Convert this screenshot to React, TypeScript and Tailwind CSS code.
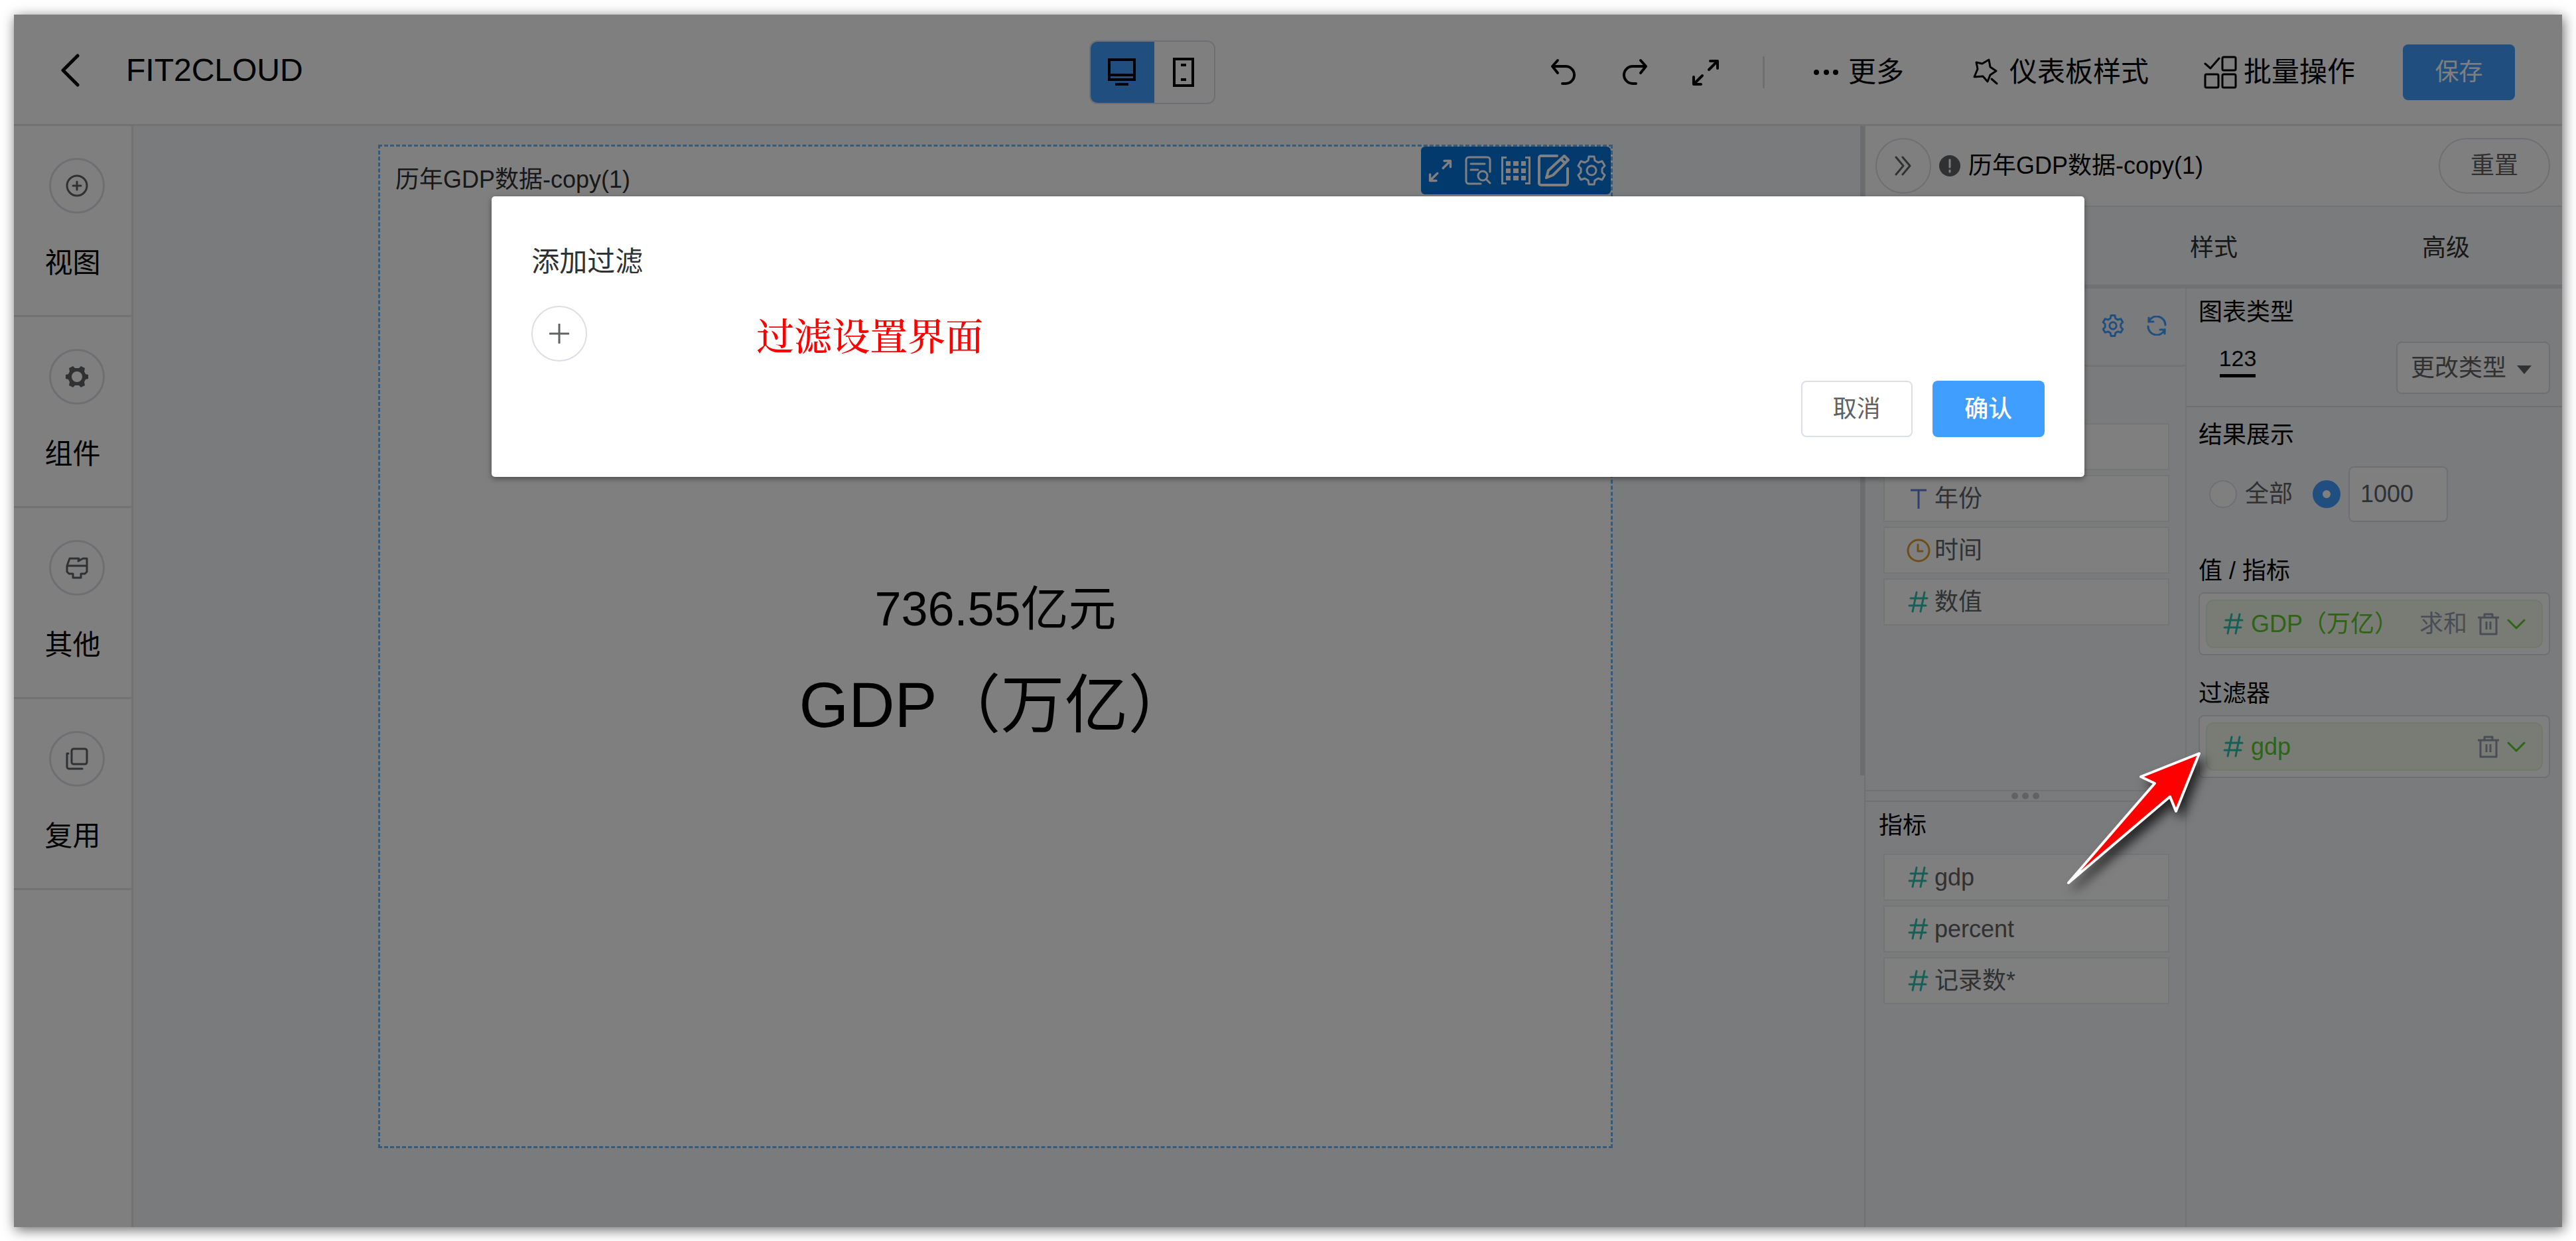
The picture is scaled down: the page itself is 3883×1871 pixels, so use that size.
import React from "react";

type IconProps = { className?: string };

const Stroke = ({
  className = "size-[42px]",
  box = "0 0 24 24",
  width = 2,
  children,
}: IconProps & { box?: string; width?: number; children: React.ReactNode }) => (
  <svg
    className={className}
    viewBox={box}
    fill="none"
    stroke="currentColor"
    strokeWidth={width}
    strokeLinecap="round"
    strokeLinejoin="round"
    aria-hidden="true"
  >
    {children}
  </svg>
);

const BackIcon = () => (
  <Stroke className="h-[50px] w-[28px]" box="0 0 28 50" width={5}>
    <path d="M25 3 3 25l22 22" />
  </Stroke>
);

const DesktopIcon = () => (
  <Stroke className="h-[42px] w-[44px]" box="0 0 44 42" width={4}>
    <path strokeLinejoin="miter" strokeLinecap="butt" d="M3 2h38v30H3zM3 25h38M12 39h20" />
  </Stroke>
);

const TabletIcon = () => (
  <Stroke className="h-[44px] w-[34px]" box="0 0 34 44" width={4}>
    <path strokeLinejoin="miter" d="M3 2h28v40H3z" />
    <path strokeLinecap="butt" d="M13 11h8M13 33h8" />
  </Stroke>
);

const UndoIcon = () => (
  <Stroke box="0 0 42 42" width={4}>
    <path d="M12 3 4 12l8 10M5 12h19a13 13 0 0 1 0 26h-5" />
  </Stroke>
);

const RedoIcon = () => (
  <Stroke box="0 0 42 42" width={4}>
    <path d="m30 3 8 9-8 10M37 12H18a13 13 0 0 0 0 26h5" />
  </Stroke>
);

const ExpandIcon = ({ className = "size-[42px]" }: IconProps) => (
  <Stroke className={className} box="0 0 42 42" width={4}>
    <path d="M28 4h11v11M38 5 26 17M14 39H3V28M4 38l12-12" />
  </Stroke>
);

const DotsIcon = () => (
  <svg className="size-[42px]" viewBox="0 0 42 42" fill="currentColor" aria-hidden="true">
    <circle cx="6" cy="21" r="4" />
    <circle cx="21" cy="21" r="4" />
    <circle cx="35" cy="21" r="4" />
  </svg>
);

const StarIcon = () => (
  <Stroke box="0 0 42 42" width={3}>
    <path d="m8 6 9 2 10-6 2 11 9 6-9 6-4 10-7-8-13 1 5-12z" />
    <path d="m31 31 8 7" />
  </Stroke>
);

const BatchIcon = () => (
  <Stroke className="size-[50px]" box="0 0 50 50" width={3}>
    <path d="m2 12 8 7L23 4" />
    <rect x="28" y="2" width="20" height="20" rx="2" />
    <rect x="2" y="28" width="20" height="20" rx="2" />
    <rect x="28" y="28" width="20" height="20" rx="2" />
  </Stroke>
);

const PlusCircleIcon = () => (
  <Stroke className="size-[34px]" box="0 0 34 34" width={3}>
    <circle cx="17" cy="17" r="15" />
    <path d="M17 11v12M11 17h12" />
  </Stroke>
);

const CogIcon = () => (
  <svg className="size-[34px]" viewBox="0 0 34 34" fill="currentColor" fillRule="evenodd" aria-hidden="true">
    <path d="m17 4 3 0 3-3 6 3-1 5 2 4 4 1v6l-4 1-2 4 1 5-6 3-3-3h-6l-3 3-6-3 1-5-2-4-4-1v-6l4-1 2-4-1-5 6-3 3 3zm0 5a8 8 0 1 0 0 16 8 8 0 0 0 0-16z" />
  </svg>
);

const ToolboxIcon = () => (
  <Stroke className="size-[34px]" box="0 0 34 34" width={3}>
    <path d="M2 14 6 3h14l-1 4 7-4h6v11M2 14h30v9l-3 3h-6v6H11v-6H5l-3-3z" />
  </Stroke>
);

const CopyIcon = () => (
  <Stroke className="size-[34px]" box="0 0 34 34" width={3}>
    <rect x="9" y="2" width="23" height="23" rx="3" />
    <path d="M4 9H2v20a3 3 0 0 0 3 3h20" />
  </Stroke>
);

const DocSearchIcon = () => (
  <Stroke className="h-[44px] w-[40px]" box="0 0 40 44" width={3}>
    <path d="M24 42H6a4 4 0 0 1-4-4V6a4 4 0 0 1 4-4h28a4 4 0 0 1 4 4v18M9 12h21M9 21h11" />
    <circle cx="27" cy="30" r="7" />
    <path d="m32 35 6 6" />
  </Stroke>
);

const GridIcon = () => (
  <svg className="h-[42px] w-[44px]" viewBox="0 0 44 42" fill="currentColor" aria-hidden="true">
    <path d="M0 0h8v3H3v36h5v3H0zM44 0h-8v3h5v36h-5v3h8zM7 7h7v7H7zM18 7h8v7h-8zM30 7h7v7h-7zM7 18h7v7H7zM18 18h8v7h-8zM30 18h7v7h-7zM7 29h7v7H7zM18 29h8v7h-8zM30 29h7v7h-7z" />
  </svg>
);

const EditIcon = () => (
  <Stroke className="size-[50px]" box="0 0 50 50" width={4}>
    <path d="M30 3H6a3 3 0 0 0-3 3v38a3 3 0 0 0 3 3h37a3 3 0 0 0 3-3V22" />
    <path d="m14 36 3-11L41 3l6 6-23 23zM36 8l6 6" />
  </Stroke>
);

const GearIcon = ({ className = "size-[46px]", width = 3 }: IconProps & { width?: number }) => (
  <Stroke className={className} box="0 0 46 46" width={width}>
    <path d="M19 2h8l1 6 5 3 6-2 4 7-4 4v6l4 4-4 7-6-2-5 3-1 6h-8l-1-6-5-3-6 2-4-7 4-4v-6l-4-4 4-7 6 2 5-3z" />
    <circle cx="23" cy="23" r="7" />
  </Stroke>
);

const RefreshIcon = () => (
  <Stroke className="size-[30px]" box="0 0 30 30" width={3}>
    <path d="M3 9a13 13 0 0 1 25 5M27 21A13 13 0 0 1 2 16" />
    <path d="M3 3v6h7M27 27v-6h-7" strokeLinejoin="miter" />
  </Stroke>
);

const ChevronsIcon = () => (
  <Stroke className="h-[30px] w-[26px]" box="0 0 26 30" width={3}>
    <path d="m2 2 11 13L2 28M12 2l11 13-11 13" />
  </Stroke>
);

const WarnIcon = () => (
  <svg className="size-[32px] text-[#606266]" viewBox="0 0 32 32" aria-hidden="true">
    <circle cx="16" cy="16" r="16" fill="currentColor" />
    <path d="M16 7v11M16 23v2" stroke="#fff" strokeWidth="3" strokeLinecap="round" />
  </svg>
);

const TextTypeIcon = () => (
  <Stroke className="size-[36px] text-[#5b7fd6]" box="0 0 36 36" width={3}>
    <path strokeLinecap="butt" d="M6 5h24M18 5v28" />
  </Stroke>
);

const ClockIcon = () => (
  <Stroke className="size-[36px] text-[#e09a2c]" box="0 0 36 36" width={3}>
    <circle cx="18" cy="18" r="16" />
    <path d="M17 9v10h7" />
  </Stroke>
);

const HashIcon = () => (
  <Stroke className="size-[36px] text-[#2bbfae]" box="0 0 36 36" width={3}>
    <path d="M15 3 9 32M27 3l-6 29M6 12h25M4 23h25" />
  </Stroke>
);

const TrashIcon = () => (
  <Stroke className="h-[34px] w-[32px]" box="0 0 32 34" width={3}>
    <path strokeLinecap="butt" d="M0 7h32M4 7v25h24V7M10 7V2h12v5M13 13v12M19 13v12" />
  </Stroke>
);

const ChevronDownIcon = () => (
  <Stroke className="h-[18px] w-[28px] text-[#5bc82a]" box="0 0 28 18" width={3}>
    <path d="m2 3 12 12L26 3" />
  </Stroke>
);

const sideItems = [
  { label: "视图", icon: <PlusCircleIcon /> },
  { label: "组件", icon: <CogIcon /> },
  { label: "其他", icon: <ToolboxIcon /> },
  { label: "复用", icon: <CopyIcon /> },
];

function TopBar() {
  return (
    <header className="flex h-[168px] shrink-0 items-center border-b-3 border-[#e4e4e4] bg-white pt-2 pr-[71px] text-black">
      <div className="flex w-[43%] items-center gap-[70px] pb-1.5 pl-[71px]">
        <button aria-label="返回">
          <BackIcon />
        </button>
        <h1 className="text-[48px] leading-none">FIT2CLOUD</h1>
      </div>
      <div className="flex h-24 w-[190px] overflow-hidden rounded-xl border-2 border-[#dcdfe6]">
        <button aria-label="桌面" className="-m-0.5 flex w-[98px] items-center justify-center bg-[#409eff]">
          <DesktopIcon />
        </button>
        <button aria-label="移动" className="flex flex-1 items-center justify-center">
          <TabletIcon />
        </button>
      </div>
      <div className="ml-auto flex items-center text-[42px] leading-none">
        <div className="mr-[72px] flex items-center gap-[65px]">
          <button aria-label="撤销">
            <UndoIcon />
          </button>
          <button aria-label="重做">
            <RedoIcon />
          </button>
          <button aria-label="全屏">
            <ExpandIcon />
          </button>
          <span className="h-12 w-[3px] bg-[#dcdfe6]" />
        </div>
        <button className="mr-[101px] flex items-center gap-3">
          <DotsIcon />
          更多
        </button>
        <button className="mr-[83px] flex items-center gap-4">
          <StarIcon />
          仪表板样式
        </button>
        <button className="mr-[72px] flex items-center gap-2.5">
          <BatchIcon />
          批量操作
        </button>
        <button className="h-[84px] w-[169px] rounded-lg bg-[#409eff] text-[36px] text-white">保存</button>
      </div>
    </header>
  );
}

function SideNav() {
  return (
    <nav className="w-[180px] shrink-0 border-r-3 border-[#e4e4e4] bg-white text-[42px] leading-none text-black">
      {sideItems.map((item) => (
        <button
          key={item.label}
          className="flex h-72 w-full flex-col items-center gap-[54px] border-b-3 border-[#e4e4e4] pt-12"
        >
          <span className="ml-3 flex size-[84px] items-center justify-center rounded-full border-3 border-[#dcdfe6] text-[#606266]">
            {item.icon}
          </span>
          {item.label}
        </button>
      ))}
    </nav>
  );
}

function Canvas() {
  return (
    <main className="relative flex min-w-0 flex-1 bg-[#f5f7fa] pt-[28px] pr-[379px] pb-[119px] pl-[369px]">
      <section className="relative flex flex-1 flex-col border-3 border-dashed border-[#70b4ee] bg-white">
        <h2 className="pt-8 pl-[23px] text-[36px] leading-none text-[#303133]">历年GDP数据-copy(1)</h2>
        <div className="flex flex-1 flex-col items-center justify-center gap-[61px] pb-[24px] text-black">
          <p className="text-[72px] leading-none">736.55亿元</p>
          <p className="text-[96px] leading-none">GDP（万亿）</p>
        </div>
        <div className="absolute top-0 right-0 grid h-[72px] w-[286px] grid-cols-5 place-items-center rounded-md bg-[#0674dc] text-white">
          <button aria-label="放大">
            <ExpandIcon className="size-[36px]" />
          </button>
          <button aria-label="查看">
            <DocSearchIcon />
          </button>
          <button aria-label="表格">
            <GridIcon />
          </button>
          <button aria-label="编辑">
            <EditIcon />
          </button>
          <button aria-label="设置">
            <GearIcon />
          </button>
        </div>
      </section>
      <div className="absolute top-0 right-0 h-[59%] w-1.5 bg-[#d6d8e0]" />
    </main>
  );
}

function FieldRow({ icon, label }: { icon: React.ReactNode; label: string }) {
  return (
    <li className="flex h-[71px] items-center gap-1.5 border-2 border-[#e9ece8] bg-white pl-[33px]">
      {icon}
      {label}
    </li>
  );
}

function FieldColumn() {
  return (
    <div className="flex w-[484px] shrink-0 flex-col border-r-2 border-[#e6e6e6] text-[36px] leading-none text-[#606266]">
      <div className="flex h-[756px] flex-col">
        <div className="flex h-[118px] shrink-0 items-center justify-end gap-[34px] border-b-3 border-[#e6e6e6] pr-7 pb-1 text-[#409eff]">
          <input
            aria-label="搜索"
            placeholder="搜索"
            className="mr-[-6px] h-[75px] w-[310px] rounded-lg border-2 border-[#dcdfe6] bg-white px-4"
          />
          <button aria-label="字段设置">
            <GearIcon className="size-[34px]" width={4} />
          </button>
          <button aria-label="刷新">
            <RefreshIcon />
          </button>
        </div>
        <h3 className="px-5 pt-6 pb-[25px] text-black">维度</h3>
        <ul className="flex flex-col gap-[7px] pr-6 pl-[27px]">
          <FieldRow icon={<TextTypeIcon />} label="地区" />
          <FieldRow icon={<TextTypeIcon />} label="年份" />
          <FieldRow icon={<ClockIcon />} label="时间" />
          <FieldRow icon={<HashIcon />} label="数值" />
        </ul>
      </div>
      <div className="flex h-[18px] shrink-0 items-center justify-center gap-1.5 border-y-2 border-[#e0e2e6]">
        <span className="size-2.5 rounded-full bg-[#c0c4cc]" />
        <span className="size-2.5 rounded-full bg-[#c0c4cc]" />
        <span className="size-2.5 rounded-full bg-[#c0c4cc]" />
      </div>
      <h3 className="px-5 pt-[18px] pb-6 text-black">指标</h3>
      <ul className="flex flex-col gap-[7px] pr-6 pl-[27px]">
        <FieldRow icon={<HashIcon />} label="gdp" />
        <FieldRow icon={<HashIcon />} label="percent" />
        <FieldRow icon={<HashIcon />} label="记录数*" />
      </ul>
    </div>
  );
}

function Chip({ label, extra }: { label: string; extra?: string }) {
  return (
    <div className="mt-[14px] rounded-lg border-2 border-[#dcdfe6] bg-white p-[9px]">
      <div className="flex h-[73px] items-center rounded-xl border-2 border-[#e1f3d8] bg-[#f3f9ea] pr-6 pl-[22px] text-[#5bc82a]">
        <HashIcon />
        <span className="ml-2 flex-1">{label}</span>
        <span className="text-[#9498ad]">{extra}</span>
        <button aria-label="删除" className="ml-4 text-[#9498ad]">
          <TrashIcon />
        </button>
        <button aria-label="展开" className="ml-3">
          <ChevronDownIcon />
        </button>
      </div>
    </div>
  );
}

function ChartColumn() {
  return (
    <div className="min-w-0 flex-1 text-[36px] leading-none text-black">
      <section className="h-[179px] border-b-2 border-[#dcdfe6] pt-[18px] pr-[18px] pl-[18px]">
        <h3>图表类型</h3>
        <div className="mt-[26px] flex items-start justify-between">
          <span className="mt-1 ml-8 flex h-[50px] w-[54px] items-center justify-center border-b-5 border-black pb-1 text-[34px]">
            123
          </span>
          <div className="relative">
            <select
              aria-label="更改类型"
              className="h-[79px] w-[232px] appearance-none rounded-lg border-2 border-[#dcdfe6] bg-white pl-5 text-[#606266]"
            >
              <option>更改类型</option>
            </select>
            <svg
              className="pointer-events-none absolute top-9 right-7 h-[13px] w-[22px] text-[#606266]"
              viewBox="0 0 22 13"
              fill="currentColor"
              aria-hidden="true"
            >
              <path d="M0 0h22L11 13z" />
            </svg>
          </div>
        </div>
      </section>
      <section className="px-[18px] pt-6">
        <h3>结果展示</h3>
        <div className="mt-[29px] flex h-[84px] items-center pl-4 text-[#606266]">
          <label className="flex items-center gap-3">
            <input
              type="radio"
              name="limit"
              className="size-[42px] appearance-none rounded-full border-2 border-[#dcdfe6] bg-white"
            />
            全部
          </label>
          <input
            type="radio"
            name="limit"
            aria-label="限制条数"
            defaultChecked
            className="ml-[30px] size-[42px] appearance-none rounded-full border-15 border-[#409eff] bg-white"
          />
          <input
            aria-label="条数"
            defaultValue="1000"
            className="ml-3 h-[84px] w-[150px] rounded-lg border-2 border-[#dcdfe6] bg-white px-4"
          />
        </div>
        <h3 className="mt-[56px]">值 / 指标</h3>
        <Chip label="GDP（万亿）" extra="求和" />
        <h3 className="mt-10">过滤器</h3>
        <Chip label="gdp" />
      </section>
    </div>
  );
}

function ConfigPanel() {
  return (
    <aside className="flex w-[1052px] shrink-0 flex-col border-l-2 border-[#e0e2da] bg-[#f5f7fa]">
      <div className="flex h-[122px] shrink-0 items-center border-b-2 border-[#e6e6e6] bg-white pr-[18px] pl-[15px] text-[36px] leading-none text-black">
        <button
          aria-label="收起"
          className="flex size-[84px] items-center justify-center rounded-full border-2 border-[#dcdfe6] text-[#606266]"
        >
          <ChevronsIcon />
        </button>
        <span className="mr-3 ml-3">
          <WarnIcon />
        </span>
        <h2 className="flex-1">历年GDP数据-copy(1)</h2>
        <button className="h-[84px] w-[168px] rounded-full border-2 border-[#dcdfe6] text-[#606266]">重置</button>
      </div>
      <div
        role="tablist"
        className="grid h-[123px] shrink-0 grid-cols-3 border-b-6 border-[#dfe2ea] pt-1.5 text-[36px] leading-none text-[#303133]"
      >
        <button role="tab" aria-selected="true" className="text-[#409eff]">
          数据
        </button>
        <button role="tab">样式</button>
        <button role="tab">高级</button>
      </div>
      <div className="flex flex-1">
        <FieldColumn />
        <ChartColumn />
      </div>
    </aside>
  );
}

function FilterDialog() {
  return (
    <div className="absolute inset-0 flex items-start justify-center bg-black/50 pt-[274px]">
      <div
        role="dialog"
        aria-label="添加过滤"
        className="w-[62.5%] rounded-[5px] bg-white px-[60px] pt-[78px] pb-[60px] shadow-[0_3px_9px_rgba(0,0,0,0.4)]"
      >
        <h2 className="text-[42px] leading-none text-[#303133]">添加过滤</h2>
        <div className="mt-[45px] flex items-center">
          <button
            aria-label="添加"
            className="flex size-[84px] items-center justify-center rounded-full border-2 border-[#dcdfe6] text-[#606266]"
          >
            <Stroke className="size-[30px]" box="0 0 30 30" width={3}>
              <path d="M15 1v28M1 15h28" />
            </Stroke>
          </button>
          <p className="ml-[255px] font-['Noto_Serif_CJK_SC','Noto_Sans_CJK_SC',serif] text-[57px] leading-none font-medium text-[#ff0000]">
            过滤设置界面
          </p>
        </div>
        <div className="mt-[29px] flex justify-end gap-[30px] text-[36px] leading-none">
          <button className="h-[85px] w-[168px] rounded-lg border-2 border-[#dcdfe6] text-[#606266]">取消</button>
          <button className="h-[85px] w-[169px] rounded-lg bg-[#409eff] font-medium text-white">确认</button>
        </div>
      </div>
    </div>
  );
}

export default function App() {
  return (
    <div className="flex min-h-screen bg-white px-[21px] pt-[22px] pb-[21px] font-['Liberation_Sans','Noto_Sans_CJK_SC',sans-serif]">
      <div className="relative flex flex-1 flex-col shadow-[2px_4px_18px_rgba(0,0,0,0.6)]">
        <TopBar />
        <div className="flex flex-1">
          <SideNav />
          <Canvas />
          <ConfigPanel />
        </div>
        <FilterDialog />
        <svg
          className="absolute top-[1103px] right-[526px] h-[240px] w-[230px] drop-shadow-[8px_10px_8px_rgba(0,0,0,0.7)]"
          viewBox="0 0 230 240"
          aria-hidden="true"
        >
          <path
            d="M209 11 121 46l21 10L12 206 165 76l9 22z"
            fill="#ff0000"
            stroke="#fff"
            strokeWidth="4"
            strokeLinejoin="round"
          />
        </svg>
      </div>
    </div>
  );
}
